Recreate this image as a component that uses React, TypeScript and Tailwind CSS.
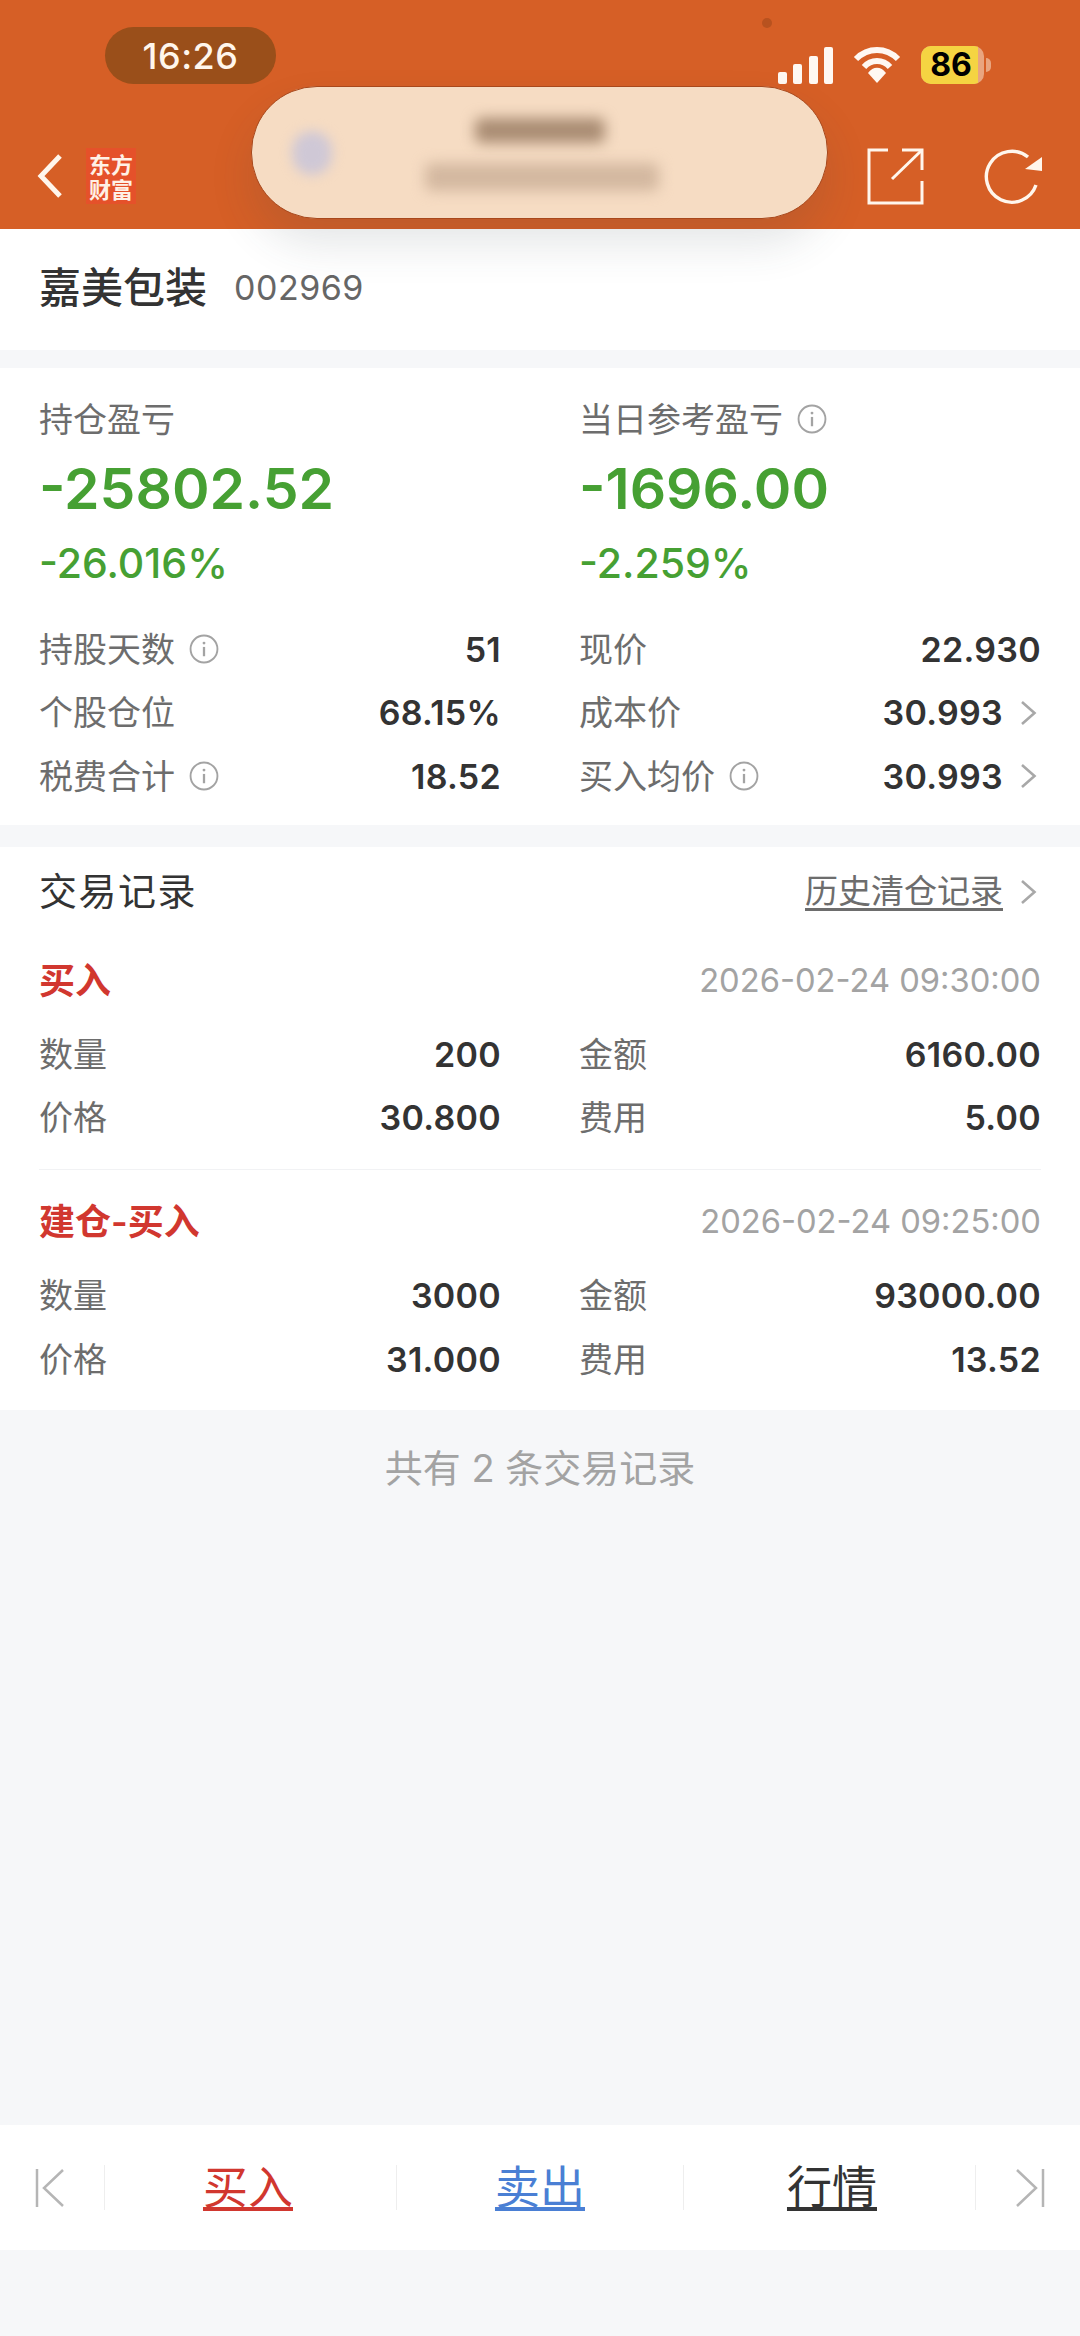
const Info = () => (
  <svg width="30" height="30" viewBox="0 0 29 29" fill="none" className="shrink-0">
    <circle cx="14.5" cy="14.5" r="13" stroke="#a3a3a3" strokeWidth="1.8" />
    <rect x="13.4" y="12.5" width="2.2" height="9" fill="#a3a3a3" />
    <circle cx="14.5" cy="8.8" r="1.4" fill="#a3a3a3" />
  </svg>
);

const Chevron = () => (
  <svg width="17" height="26" viewBox="0 0 17 26" fill="none" className="shrink-0">
    <path d="M2 2l12.5 11L2 24" stroke="#a8a8a8" strokeWidth="2.6" />
  </svg>
);

interface RowProps {
  label: string;
  value: string;
  info?: boolean;
  arrow?: boolean;
}

const Row = ({ label, value, info, arrow }: RowProps) => (
  <div className="flex h-[63.5px] items-center justify-between">
    <div className="flex items-center gap-[14px] text-[34px] text-[#6d6d6d]">
      {label}
      {info && <Info />}
    </div>
    <div className="flex items-center gap-[17px] text-[34px] font-semibold tracking-[0.3px] text-[#333333]">
      {value}
      {arrow && (
        <span className="mr-[4px]">
          <Chevron />
        </span>
      )}
    </div>
  </div>
);

const Summary = ({ label, amount, percent, info }: { label: string; amount: string; percent: string; info?: boolean }) => (
  <div>
    <div className="flex h-[40px] items-center gap-[14px] text-[34px] text-[#6d6d6d]">
      {label}
      {info && <Info />}
    </div>
    <div className="mt-[15px] h-[70px] text-[57px] leading-[70px] font-semibold text-[#46a033]">{amount}</div>
    <div className="mt-[16px] h-[46px] text-[41px] leading-[46px] font-medium text-[#46a033]">{percent}</div>
  </div>
);

const Trade = ({ type, time, qty, amount, price, fee }: { type: string; time: string; qty: string; amount: string; price: string; fee: string }) => (
  <div>
    <div className="flex h-[46px] items-center justify-between">
      <span className="text-[36px] font-semibold text-[#d1372f]">{type}</span>
      <span className="text-[32.7px] text-[#a3a3a3]">{time}</span>
    </div>
    <div className="mt-[19px] grid grid-cols-2 gap-x-[78px]">
      <Row label="数量" value={qty} />
      <Row label="金额" value={amount} />
      <Row label="价格" value={price} />
      <Row label="费用" value={fee} />
    </div>
  </div>
);

const App = () => {
  return (
    <div className="relative flex h-[2336px] w-[1080px] flex-col overflow-hidden bg-[#f6f7f9] font-['Inter','Noto_Sans_CJK_SC',sans-serif]">
      <header className="h-[229px] bg-[#d65f26]">
        <div className="flex h-[84px] items-end justify-between pr-[88px] pl-[105px]">
          <div className="flex h-[57px] w-[171px] items-center justify-center rounded-full bg-[#9a4f1a] text-[36px] font-medium tracking-[0.5px] text-[#fff6ec]">
            16:26
          </div>
          <div className="flex items-center">
            <svg width="56" height="37" viewBox="0 0 56 37" fill="#fff8f2">
              <rect x="0" y="25" width="9" height="12" rx="2" />
              <rect x="15" y="17" width="9" height="20" rx="2" />
              <rect x="31" y="9" width="9" height="28" rx="2" />
              <rect x="46" y="0" width="9" height="37" rx="2" />
            </svg>
            <svg width="48" height="38" viewBox="0 0 48 38" fill="none" className="ml-[19px]">
              <path d="M3 13C15 1 33 1 45 13" stroke="#fff8f2" strokeWidth="6" />
              <path d="M11 21C18 13 30 13 37 21" stroke="#fff8f2" strokeWidth="6" />
              <path d="M15 27C20 20 28 20 33 27L24 37z" fill="#fff8f2" />
            </svg>
            <div className="ml-[20px] flex h-[38px] w-[71px] items-center">
              <div className="flex h-full w-[63px] overflow-hidden rounded-[10px] bg-[#e9a57f]">
                <div className="flex h-full w-[57px] items-center justify-center bg-[#f5d442] pl-[3px] text-[32px] font-bold text-black">
                  86
                </div>
              </div>
              <div className="ml-[2px] h-[14px] w-[5px] rounded-r-full bg-[#e9a57f]" />
            </div>
          </div>
        </div>
        <div className="flex h-[145px] items-center justify-between pt-[38px] pr-[36px] pl-[37px]">
          <div className="flex items-center gap-[23px]">
            <svg width="26" height="46" viewBox="0 0 26 46" fill="none">
              <path d="M23 3L4 23l19 20" stroke="#fff6ec" strokeWidth="5" />
            </svg>
            <div className="flex h-[56px] w-[50px] items-center justify-center bg-[#e5512a]">
              <div className="w-[44px] text-center font-['Noto_Sans_CJK_SC',sans-serif] text-[22px] leading-[25px] font-bold break-all text-[#fff1e6]">
                东方财富
              </div>
            </div>
          </div>
          <div className="flex items-center gap-[60px]">
            <svg width="58" height="58" viewBox="0 0 58 58" fill="none" stroke="#fff6ec" strokeWidth="3">
              <path d="M22 3H3v53h53V34" />
              <path d="M36 3h20v20" />
              <path d="M26 32L56 3" />
            </svg>
            <svg width="60" height="58" viewBox="0 0 60 58" fill="none">
              <path d="M44 10A25.5 25.5 0 1 0 52 38" stroke="#fff6ec" strokeWidth="3.4" />
              <path d="M58 10v14L41 22z" fill="#fff6ec" />
            </svg>
          </div>
        </div>
      </header>

      {/* camera dot */}
      <div className="absolute top-[18px] left-[762px] h-[10px] w-[10px] rounded-full bg-[#b8521f]" />

      {/* notification banner lying over the header */}
      <div className="absolute top-[86px] left-[251px] h-[133px] w-[577px] overflow-hidden rounded-[66px] border border-[#a8481c] bg-[#f6dcc3] shadow-[0_24px_44px_rgba(60,70,80,0.14)]">
        <div className="absolute top-[44px] left-[40px] h-[44px] w-[40px] rounded-full bg-[#cfc8d6] blur-[6px]" />
        <div className="absolute top-[31px] left-[223px] h-[25px] w-[130px] rounded-md bg-[#a98c73] blur-[7px]" />
        <div className="absolute top-[76px] left-[173px] h-[28px] w-[234px] rounded-md bg-[#d3b8a0] blur-[7px]" />
      </div>

      <div className="flex h-[121px] items-center gap-[27px] bg-white pr-[39px] pb-[4px] pl-[39px]">
        <span className="text-[42px] font-medium text-[#333333]">嘉美包装</span>
        <span className="text-[34px] tracking-[0.5px] text-[#666666]">002969</span>
      </div>

      <section className="mt-[18px] bg-white px-[39px] pt-[31px] pb-[16.5px]">
        <div className="grid grid-cols-2 gap-x-[78px]">
          <Summary label="持仓盈亏" amount="-25802.52" percent="-26.016%" />
          <Summary label="当日参考盈亏" amount="-1696.00" percent="-2.259%" info />
        </div>
        <div className="mt-[31.5px] grid grid-cols-2 gap-x-[78px]">
          <Row label="持股天数" value="51" info />
          <Row label="现价" value="22.930" />
          <Row label="个股仓位" value="68.15%" />
          <Row label="成本价" value="30.993" arrow />
          <Row label="税费合计" value="18.52" info />
          <Row label="买入均价" value="30.993" info arrow />
        </div>
      </section>

      <section className="mt-[22px] bg-white px-[39px] pt-[20px]">
        <div className="flex h-[50px] items-center justify-between">
          <span className="text-[38px] tracking-[1.5px] text-[#333333]">交易记录</span>
          <div className="mr-[4px] flex items-center gap-[17px]">
            <span className="text-[33px] text-[#6d6d6d] underline underline-offset-[5px]">历史清仓记录</span>
            <Chevron />
          </div>
        </div>
        <div className="mt-[41px] border-b border-[#f1f2f4] pb-[19.5px]">
          <Trade type="买入" time="2026-02-24 09:30:00" qty="200" amount="6160.00" price="30.800" fee="5.00" />
        </div>
        <div className="mt-[29px] pb-[19px]">
          <Trade type="建仓-买入" time="2026-02-24 09:25:00" qty="3000" amount="93000.00" price="31.000" fee="13.52" />
        </div>
      </section>

      <div className="flex h-[116px] items-center justify-center text-[38px] whitespace-pre text-[#a3a3a3]">共有 2 条交易记录</div>

      <div className="flex-1" />

      <nav className="mb-[86px] flex h-[125px] items-center bg-white">
        <div className="flex h-[45px] w-[105px] items-center border-r border-[#eeeeee] pl-[35px]">
          <svg width="30" height="40" viewBox="0 0 30 40" fill="none" stroke="#b5b5b5" strokeWidth="2.5">
            <path d="M2 1v38" />
            <path d="M28 2L9 20l19 18" />
          </svg>
        </div>
        <div className="flex h-[45px] flex-1 items-center justify-center border-r border-[#eeeeee] pr-[5px] text-[45px] leading-[52px] text-[#d1372f] underline underline-offset-[3px]">
          买入
        </div>
        <div className="flex h-[45px] flex-1 items-center justify-center border-r border-[#eeeeee] text-[45px] leading-[52px] text-[#4a7fd4] underline underline-offset-[3px]">
          卖出
        </div>
        <div className="flex h-[45px] flex-1 items-center justify-center border-r border-[#eeeeee] pl-[5px] text-[45px] leading-[52px] text-[#333333] underline underline-offset-[3px]">
          行情
        </div>
        <div className="flex h-[45px] w-[104px] items-center justify-end pr-[35px]">
          <svg width="30" height="40" viewBox="0 0 30 40" fill="none" stroke="#b5b5b5" strokeWidth="2.5">
            <path d="M28 1v38" />
            <path d="M2 2l19 18L2 38" />
          </svg>
        </div>
      </nav>
    </div>
  );
};

export default App;
